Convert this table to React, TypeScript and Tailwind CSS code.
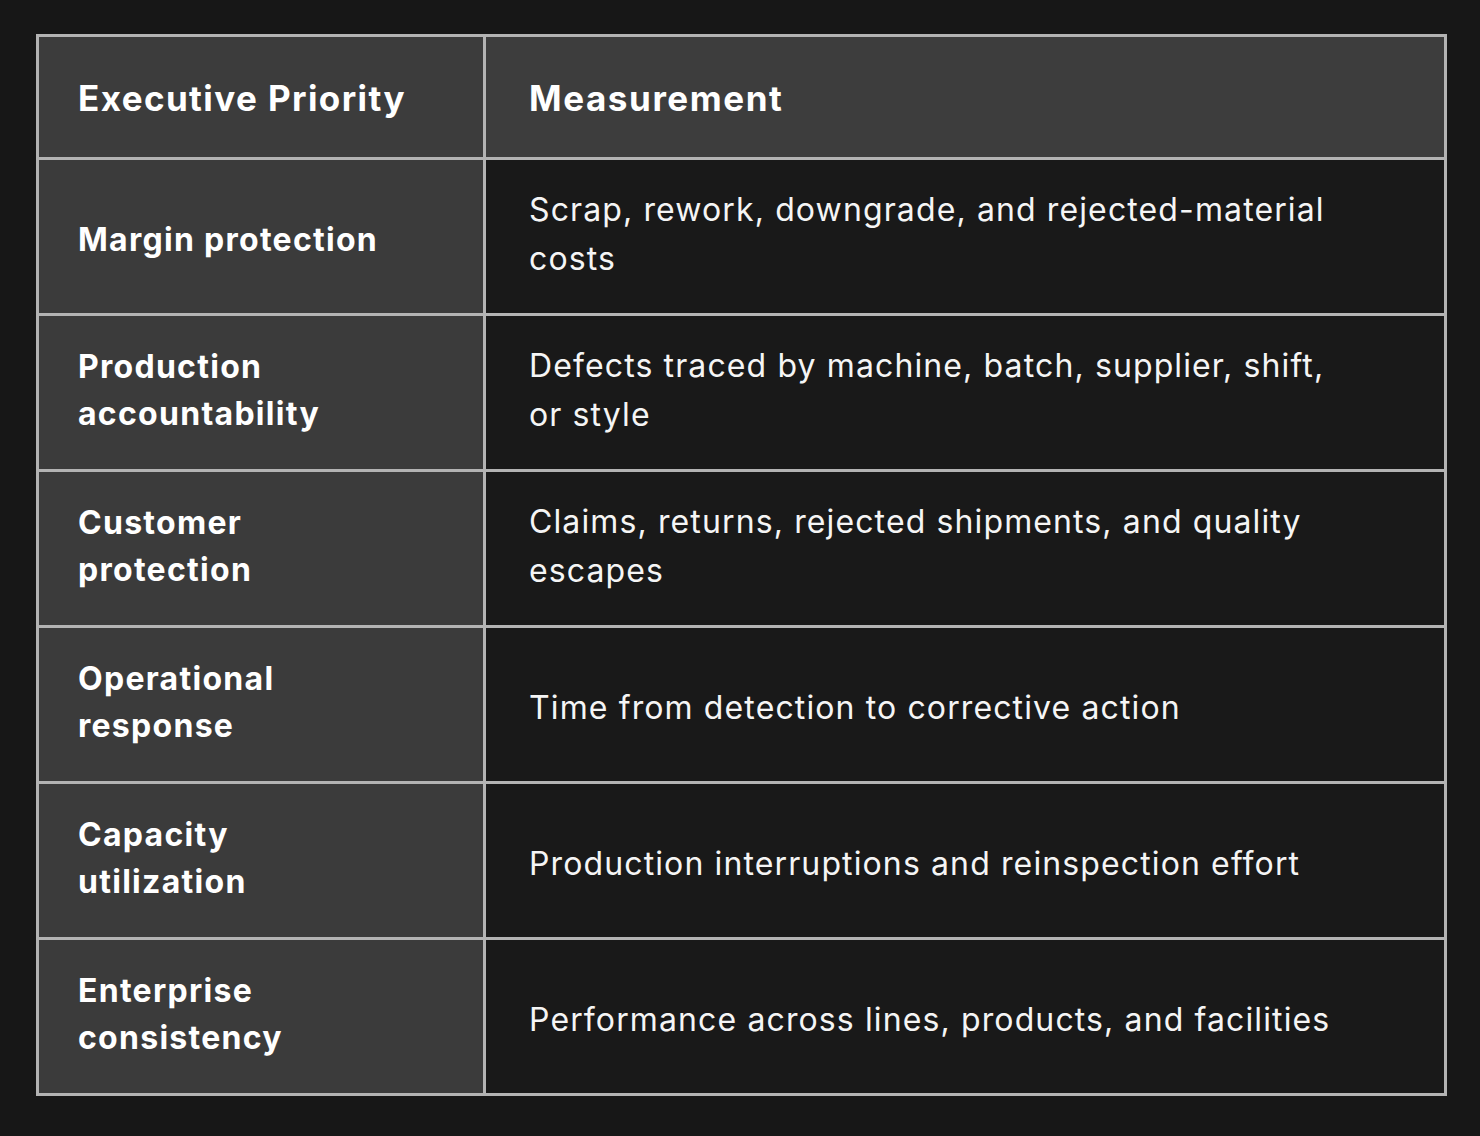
import React from 'react';

interface Row {
  priority: string[];
  measurement: string[];
}

const rows: Row[] = [
  { priority: ['Margin protection'], measurement: ['Scrap, rework, downgrade, and rejected-material', 'costs'] },
  { priority: ['Production', 'accountability'], measurement: ['Defects traced by machine, batch, supplier, shift,', 'or style'] },
  { priority: ['Customer', 'protection'], measurement: ['Claims, returns, rejected shipments, and quality', 'escapes'] },
  { priority: ['Operational', 'response'], measurement: ['Time from detection to corrective action'] },
  { priority: ['Capacity', 'utilization'], measurement: ['Production interruptions and reinspection effort'] },
  { priority: ['Enterprise', 'consistency'], measurement: ['Performance across lines, products, and facilities'] },
];

// single lines sit a little lower, wrapped ones a little higher
const Lines: React.FC<{ lines: string[] }> = ({ lines }) => (
  <div className={lines.length > 1 ? 'pb-[5px]' : 'pt-[5px]'}>
    {lines.map((line) => (
      <span key={line} className="block whitespace-nowrap">
        {line}
      </span>
    ))}
  </div>
);

export default function App() {
  return (
    <div className="min-h-[1136px] w-[1480px] bg-[#171717] pl-[36px] pt-[34px] font-['Inter','Noto_Sans',sans-serif] text-white">
      <div className="grid w-[1411px] grid-cols-[444px_958px] grid-rows-[120px_repeat(6,153px)] gap-[3px] bg-[#b3b3b3] p-[3px]">
        <div className="flex items-center bg-[#3c3c3c] pl-[39px] pt-[3px] text-[35px] font-bold tracking-[0.04em]">
          Executive Priority
        </div>
        <div className="flex items-center bg-[#3d3d3d] pl-[43px] pt-[3px] text-[35px] font-bold tracking-[0.045em]">
          Measurement
        </div>
        {rows.map((row) => (
          <React.Fragment key={row.priority.join(' ')}>
            <div className="flex items-center bg-[#3b3b3b] pl-[39px] text-[32px] leading-[47px] font-bold tracking-[0.04em]">
              <Lines lines={row.priority} />
            </div>
            <div className="flex items-center bg-[#191919] pl-[43px] text-[32px] leading-[49px] font-normal tracking-[0.035em] text-[#f5f5f5]">
              <Lines lines={row.measurement} />
            </div>
          </React.Fragment>
        ))}
      </div>
    </div>
  );
}
